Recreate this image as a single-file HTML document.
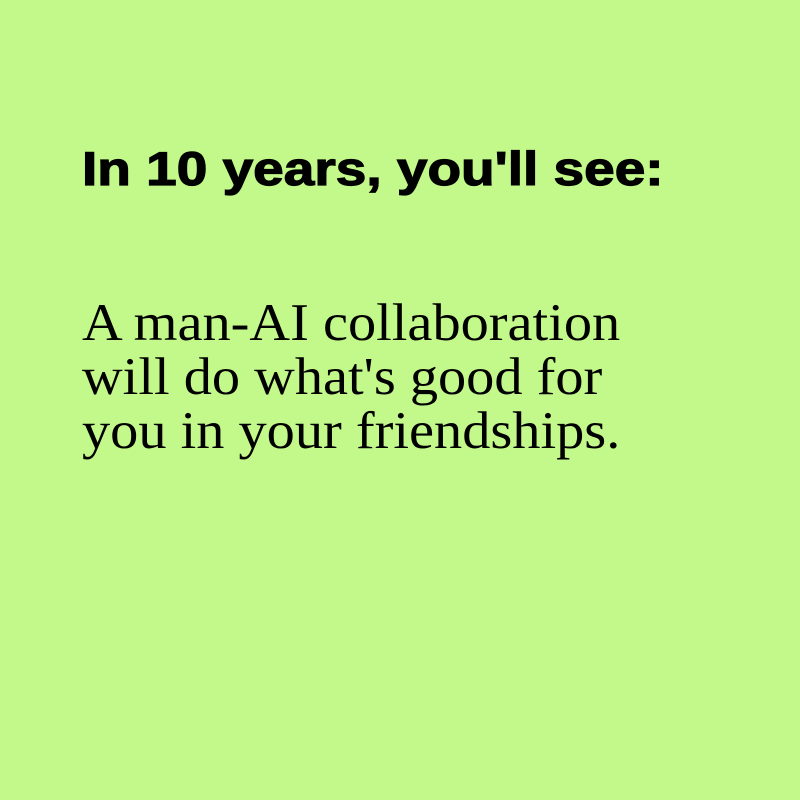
<!DOCTYPE html>
<html><head><style>
html,body{margin:0;padding:0;width:800px;height:800px;background:#c3f98a;overflow:hidden}
.h{position:absolute;left:82px;top:145px;font:bold 47px/48px "Liberation Sans",sans-serif;color:#000;white-space:nowrap;transform:scaleX(1.17);transform-origin:0 0;-webkit-text-stroke:1.2px #000}
.b{position:absolute;left:82px;top:296px;font:53px/54px "Liberation Serif",serif;color:#000;white-space:nowrap;transform:scaleX(1.063);transform-origin:0 0}
</style></head><body>
<div class="h">In 10 years, you'll see:</div>
<div class="b">A man-AI collaboration<br>will do what's good for<br>you in your friendships.</div>
</body></html>
